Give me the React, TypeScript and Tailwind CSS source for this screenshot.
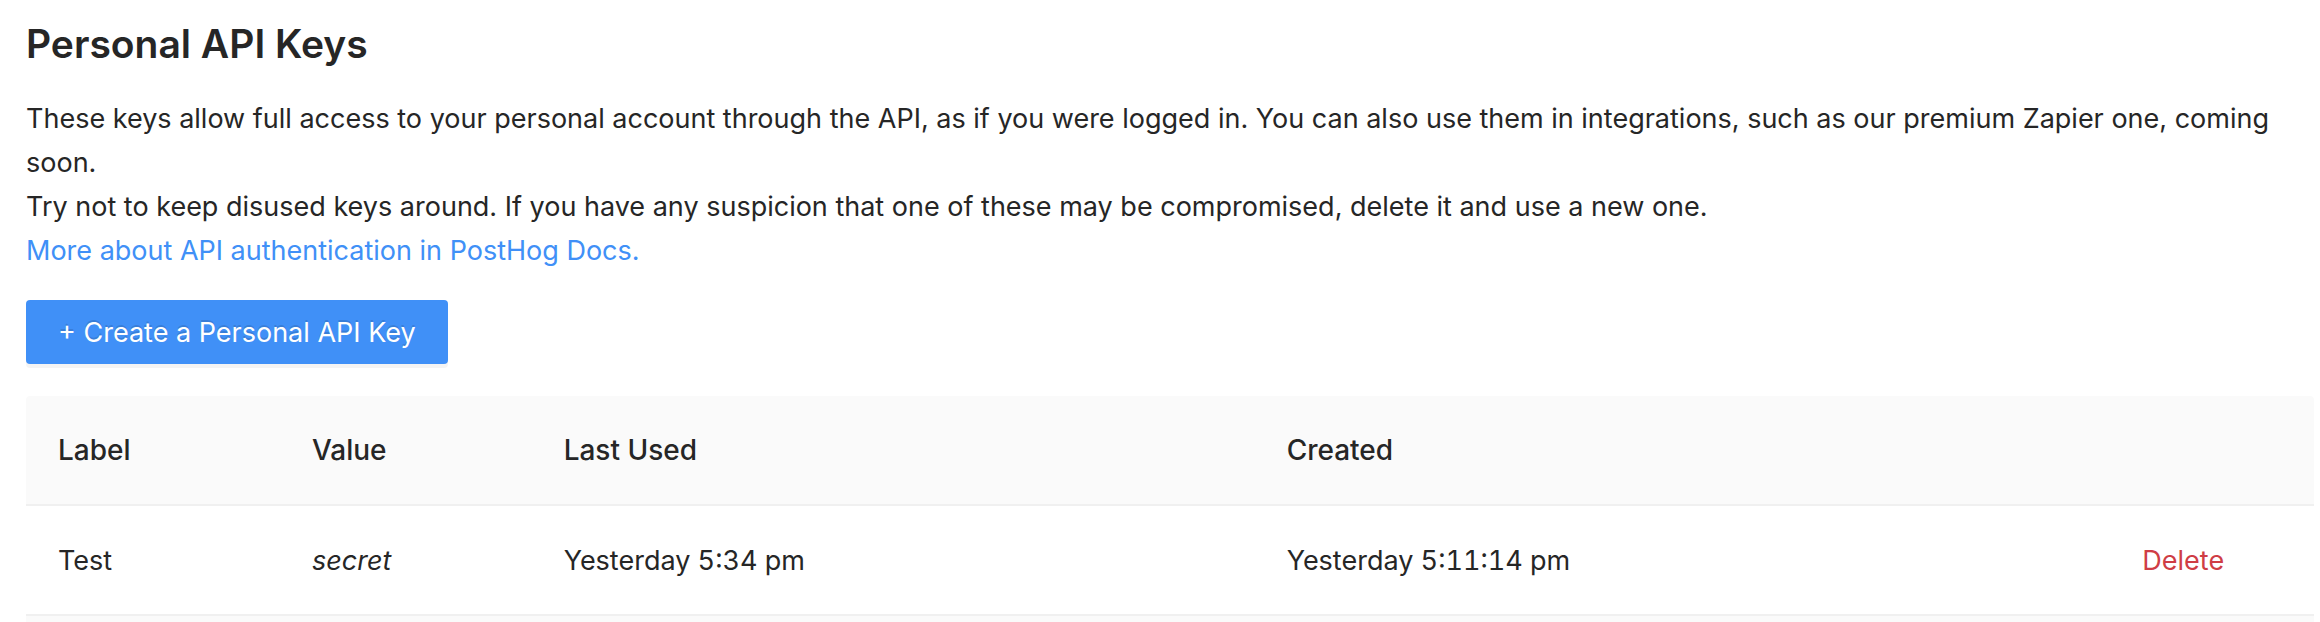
const headers = ['Label', 'Value', 'Last Used', 'Created', '']

export default function App() {
  return (
    <main className="bg-white pl-[26px] pr-[6px] pt-5 font-['Inter',sans-serif] text-[27px] leading-[44px] text-[#262626]">
      <h2 className="text-[39px] leading-[48px] font-semibold">Personal API Keys</h2>
      <p className="mt-[29px] pr-2">
        These keys allow full access to your personal account through the API, as if you were logged in. You can also use them in integrations, such as our premium Zapier one, coming soon.
        <br />
        Try not to keep disused keys around. If you have any suspicion that one of these may be compromised, delete it and use a new one.
        <br />
        <a href="#docs" className="text-[#4090f7]">More about API authentication in PostHog Docs.</a>
      </p>
      <button type="button" className="mt-[27px] block h-16 rounded-[4px] bg-[#4090f7] px-8 pt-0.5 text-white shadow-[0_4px_0_rgba(0,0,0,0.045)] [text-shadow:0_-2px_0_rgba(0,0,0,0.12)]">+ Create a Personal API Key</button>
      <table className="mt-8 w-full table-fixed border-separate border-spacing-0 text-left">
        <colgroup>
          <col className="w-[11.1%]" />
          <col className="w-[11%]" />
          <col className="w-[31.6%]" />
          <col className="w-[37.4%]" />
          <col />
        </colgroup>
        <thead>
          <tr>
            {headers.map((header) => (
              <th key={header} scope="col" className="h-[110px] border-b-2 border-[#f0f0f0] bg-[#fafafa] px-8 py-0 text-[28px] font-medium first:rounded-tl-[4px] last:rounded-tr-[4px]">{header}</th>
            ))}
          </tr>
        </thead>
        <tbody>
          <tr className="tabular-nums">
            <td className="h-[110px] border-b-2 border-[#f0f0f0] px-8 pt-0.5 pb-0">Test</td>
            <td className="h-[110px] border-b-2 border-[#f0f0f0] px-8 pt-0.5 pb-0 italic">secret</td>
            <td className="h-[110px] border-b-2 border-[#f0f0f0] px-8 pt-0.5 pb-0">Yesterday 5:34 pm</td>
            <td className="h-[110px] border-b-2 border-[#f0f0f0] px-8 pt-0.5 pb-0">Yesterday 5:11:14 pm</td>
            <td className="h-[110px] border-b-2 border-[#f0f0f0] px-8 pt-0.5 pb-0"><button type="button" className="text-[#cf3d45]">Delete</button></td>
          </tr>
        </tbody>
      </table>
      <div className="h-1.5 bg-[#fafafa]" />
    </main>
  )
}
